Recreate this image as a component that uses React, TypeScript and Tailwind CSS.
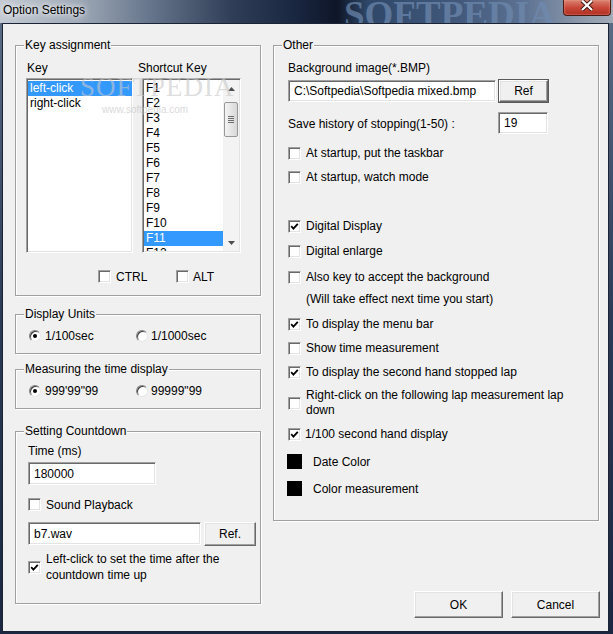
import React, { ReactNode } from "react";

// Win7 classic-ish controls
function CheckBox({ checked }: { checked?: boolean }) {
  return (
    <span className="flex h-[13px] w-[13px] shrink-0 items-center justify-center border border-t-[#a0a0a0] border-l-[#a0a0a0] border-r-white border-b-white bg-white shadow-[inset_1px_1px_0_#696969,inset_-1px_-1px_0_#e3e3e3]">
      {checked && (
        <svg width="9" height="9" viewBox="0 0 9 9">
          <path d="M1.2 4.2 L3.4 6.6 L7.8 1.8" fill="none" stroke="#000" strokeWidth="1.8" />
        </svg>
      )}
    </span>
  );
}

function Radio({ checked }: { checked?: boolean }) {
  return (
    <span className="flex h-[12px] w-[12px] shrink-0 items-center justify-center rounded-full border border-t-[#808080] border-l-[#808080] border-r-[#e8e8e8] border-b-[#e8e8e8] bg-white shadow-[inset_1px_1px_0_#404040]">
      {checked && <span className="h-[4px] w-[4px] rounded-full bg-black" />}
    </span>
  );
}

function Field({ value, className }: { value: string; className: string }) {
  return (
    <div
      className={`flex items-center bg-white pl-[5px] border border-t-[#a0a0a0] border-l-[#a0a0a0] border-r-white border-b-white shadow-[inset_1px_1px_0_#696969,inset_-1px_-1px_0_#e3e3e3] ${className}`}
    >
      {value}
    </div>
  );
}

function Btn({ children, className }: { children: ReactNode; className: string }) {
  return (
    <div
      className={`flex items-center justify-center bg-[#f0f0f0] border border-t-white border-l-white border-r-[#696969] border-b-[#696969] shadow-[inset_-1px_-1px_0_#a0a0a0,inset_1px_1px_0_#e3e3e3] ${className}`}
    >
      {children}
    </div>
  );
}

function Group({ title, className, children }: { title: string; className: string; children?: ReactNode }) {
  return (
    <div className={`flex flex-col border border-[#a0a0a0] shadow-[1px_1px_0_#fff,inset_1px_1px_0_#fff] ${className}`}>
      <div className="-mt-[8px] ml-[8px] h-[15px] w-fit bg-[#f0f0f0] px-[1px] leading-[15px]">{title}</div>
      {children}
    </div>
  );
}

function CheckRow({ label, checked, className = "" }: { label: ReactNode; checked?: boolean; className?: string }) {
  return (
    <div className={`flex h-[15px] items-center gap-[5px] pl-[14px] leading-[15px] ${className}`}>
      <CheckBox checked={checked} />
      <span>{label}</span>
    </div>
  );
}

function Arrow({ up }: { up?: boolean }) {
  return (
    <svg width="7" height="4" viewBox="0 0 7 4">
      <path d={up ? "M0 4 L3.5 0 L7 4 Z" : "M0 0 L3.5 4 L7 0 Z"} fill="#4d4d4d" />
    </svg>
  );
}

const keys = ["F1", "F2", "F3", "F4", "F5", "F6", "F7", "F8", "F9", "F10", "F11", "F12"];

export default function App() {
  return (
    <div className="flex h-[634px] w-[613px] flex-col overflow-hidden bg-gradient-to-b from-[#5e6f88] via-[#2b3a55] to-[#1b2740] font-['Liberation_Sans',Arial,sans-serif] text-[12px] text-black">
      {/* title bar */}
      <div className="relative flex h-[23px] shrink-0 overflow-hidden bg-[linear-gradient(90deg,#c3cad3_0%,#a2acb9_12%,#64738a_25%,#2f3d56_38%,#1a2741_48%,#0e1628_55%,#2f4869_60%,#42597c_75%,#5f7494_86%,#8e9aab_95%,#a1abb8_100%)]">
        <div className="pl-[3px] pt-[3px] leading-[15px] [text-shadow:0_0_5px_#fff,0_0_9px_rgba(255,255,255,0.9)]">
          Option Settings
        </div>
        <div className="absolute left-[344px] top-[-13px] font-['Liberation_Serif',serif] text-[37px] font-bold text-[#6f8bb0]/70">
          SOFTPEDIA
        </div>
        <div className="relative ml-auto mr-[2px] flex h-[16px] w-[48px] items-start justify-center rounded-b-[4px] border border-t-0 border-[#4a1a14] bg-gradient-to-b from-[#d9806f] via-[#c9483a] to-[#b02e1f] shadow-[inset_0_0_2px_#f2b0a0]">
          <svg width="14" height="11" viewBox="0 0 14 11">
            <path d="M2 0.5 L12 10 M12 0.5 L2 10" stroke="#3a1410" strokeWidth="4" />
            <path d="M2 0.5 L12 10 M12 0.5 L2 10" stroke="#fff" strokeWidth="2.2" />
          </svg>
        </div>
      </div>

      {/* client area */}
      <div className="relative ml-[2px] h-[609px] w-[607px] border border-[#1b2436] bg-[#f0f0f0]">
        <div className="flex gap-[12px] pl-[12px] pt-[21px]">
          {/* left column */}
          <div className="flex w-[246px] flex-col">
            <Group title="Key assignment" className="h-[251px]">
              <div className="mt-[8px] flex h-[15px] leading-[15px]">
                <span className="w-[122px] pl-[11px]">Key</span>
                <span>Shortcut Key</span>
              </div>
              <div className="mt-[2px] flex gap-[9px] pl-[10px]">
                <div className="h-[175px] w-[107px] border border-t-[#a0a0a0] border-l-[#a0a0a0] border-r-white border-b-white bg-white pl-[1px] pt-[2px] shadow-[inset_1px_1px_0_#696969,inset_-1px_-1px_0_#e3e3e3]">
                  <div className="h-[15px] bg-[#3399ff] pl-[2px] leading-[15px] text-white">left-click</div>
                  <div className="h-[15px] pl-[2px] leading-[15px]">right-click</div>
                </div>
                <div className="flex h-[175px] w-[99px] border border-t-[#a0a0a0] border-l-[#a0a0a0] border-r-white border-b-white bg-white p-[1px] shadow-[inset_1px_1px_0_#696969,inset_-1px_-1px_0_#e3e3e3]">
                  <div className="flex-1 overflow-hidden pt-[1px]">
                    {keys.map((k) => (
                      <div
                        key={k}
                        className={`h-[15px] pl-[2px] leading-[15px] ${k === "F11" ? "bg-[#3399ff] text-white" : ""}`}
                      >
                        {k}
                      </div>
                    ))}
                  </div>
                  <div className="flex w-[16px] flex-col bg-[#f3f3f3]">
                    <div className="flex h-[17px] items-center justify-center">
                      <Arrow up />
                    </div>
                    <div className="mx-[1px] mt-[5px] flex h-[35px] flex-col items-center justify-center gap-[1px] rounded-[2px] border border-[#979797] bg-gradient-to-r from-[#f3f3f3] to-[#d8d8d8]">
                      <span className="h-[1px] w-[6px] bg-[#6c6c6c]" />
                      <span className="h-[1px] w-[6px] bg-[#6c6c6c]" />
                      <span className="h-[1px] w-[6px] bg-[#6c6c6c]" />
                      <span className="h-[1px] w-[6px] bg-[#6c6c6c]" />
                    </div>
                    <div className="mt-auto flex h-[17px] items-center justify-center">
                      <Arrow />
                    </div>
                  </div>
                </div>
              </div>
              <div className="mt-[17px] flex h-[13px] items-center pl-[82px]">
                <div className="flex w-[78px] items-center gap-[5px]">
                  <CheckBox />
                  <span>CTRL</span>
                </div>
                <div className="flex items-center gap-[4px]">
                  <CheckBox />
                  <span>ALT</span>
                </div>
              </div>
            </Group>

            <Group title="Display Units" className="mt-[18px] h-[40px]">
              <div className="mt-[7px] flex h-[13px] items-center pl-[13px]">
                <div className="flex w-[107px] items-center gap-[4px]">
                  <Radio checked />
                  <span>1/100sec</span>
                </div>
                <div className="flex items-center gap-[3px]">
                  <Radio />
                  <span>1/1000sec</span>
                </div>
              </div>
            </Group>

            <Group title="Measuring the time display" className="mt-[15px] h-[40px]">
              <div className="mt-[7px] flex h-[13px] items-center pl-[13px]">
                <div className="flex w-[107px] items-center gap-[4px]">
                  <Radio checked />
                  <span>999'99"99</span>
                </div>
                <div className="flex items-center gap-[3px]">
                  <Radio />
                  <span>99999"99</span>
                </div>
              </div>
            </Group>

            <Group title="Setting Countdown" className="mt-[22px] h-[173px]">
              <div className="mt-[5px] h-[15px] pl-[12px] leading-[15px]">Time (ms)</div>
              <Field value="180000" className="ml-[12px] mt-[3px] h-[23px] w-[128px]" />
              <div className="mt-[12px] flex h-[15px] items-center gap-[5px] pl-[12px]">
                <CheckBox />
                <span>Sound Playback</span>
              </div>
              <div className="mt-[10px] flex items-start gap-[3px] pl-[12px]">
                <Field value="b7.wav" className="h-[23px] w-[173px]" />
                <Btn className="h-[24px] w-[52px]">Ref.</Btn>
              </div>
              <div className="mt-[5px] flex items-center gap-[5px] pl-[12px]">
                <CheckBox checked />
                <span className="w-[200px] leading-[16px]">Left-click to set the time after the countdown time up</span>
              </div>
            </Group>
          </div>

          {/* right column */}
          <div className="flex w-[327px] flex-col">
            <Group title="Other" className="h-[476px] w-[326px]">
              <div className="mt-[8px] h-[15px] pl-[14px] leading-[15px]">Background image(*.BMP)</div>
              <div className="mt-[3px] flex h-[24px] items-center gap-[3px] pl-[14px]">
                <Field value="C:\Softpedia\Softpedia mixed.bmp" className="h-[22px] w-[208px]" />
                <Btn className="h-[22px] w-[49px] ring-1 ring-[#5a5a5a]">Ref</Btn>
              </div>
              <div className="mt-[9px] flex h-[22px]">
                <div className="w-[224px] pl-[14px] pt-[5px] leading-[15px]">Save history of stopping(1-50) :</div>
                <Field value="19" className="h-[22px] w-[50px]" />
              </div>
              <CheckRow className="mt-[12px]" label="At startup, put the taskbar" />
              <CheckRow className="mt-[9px]" label="At startup, watch mode" />
              <CheckRow className="mt-[34px]" label="Digital Display" checked />
              <CheckRow className="mt-[10px]" label="Digital enlarge" />
              <CheckRow className="mt-[11px]" label="Also key to accept the background" />
              <div className="mt-[7px] h-[15px] pl-[32px] leading-[15px]">(Will take effect next time you start)</div>
              <CheckRow className="mt-[10px]" label="To display the menu bar" checked />
              <CheckRow className="mt-[9px]" label="Show time measurement" />
              <CheckRow className="mt-[9px]" label="To display the second hand stopped lap" checked />
              <div className="mt-[8px] flex h-[30px] items-center gap-[5px] pl-[14px]">
                <CheckBox />
                <span className="w-[275px] leading-[15px]">Right-click on the following lap measurement lap down</span>
              </div>
              <div className="mt-[9px] flex h-[15px] items-center gap-[4px] pl-[14px] leading-[15px]">
                <CheckBox checked />
                <span>1/100 second hand display</span>
              </div>
              <div className="mt-[12px] flex h-[15px] items-center gap-[11px] pl-[13px]">
                <span className="h-[15px] w-[15px] bg-black" />
                <span>Date Color</span>
              </div>
              <div className="mt-[12px] flex h-[15px] items-center gap-[11px] pl-[13px]">
                <span className="h-[15px] w-[15px] bg-black" />
                <span>Color measurement</span>
              </div>
            </Group>
            <div className="mt-[70px] flex justify-end gap-[8px]">
              <Btn className="h-[27px] w-[89px]">OK</Btn>
              <Btn className="h-[27px] w-[89px]">Cancel</Btn>
            </div>
          </div>
        </div>

        {/* watermark over the lists */}
        <div className="pointer-events-none absolute left-[77px] top-[49px] font-['Liberation_Serif',serif] text-[27px] leading-[28px] tracking-[1px] text-[rgba(200,200,200,0.6)]">
          SOFTPEDIA
        </div>
        <div className="pointer-events-none absolute left-[99px] top-[80px] text-[10px] leading-[12px] text-[rgba(190,190,190,0.6)]">
          www.softpedia.com
        </div>
      </div>
    </div>
  );
}
